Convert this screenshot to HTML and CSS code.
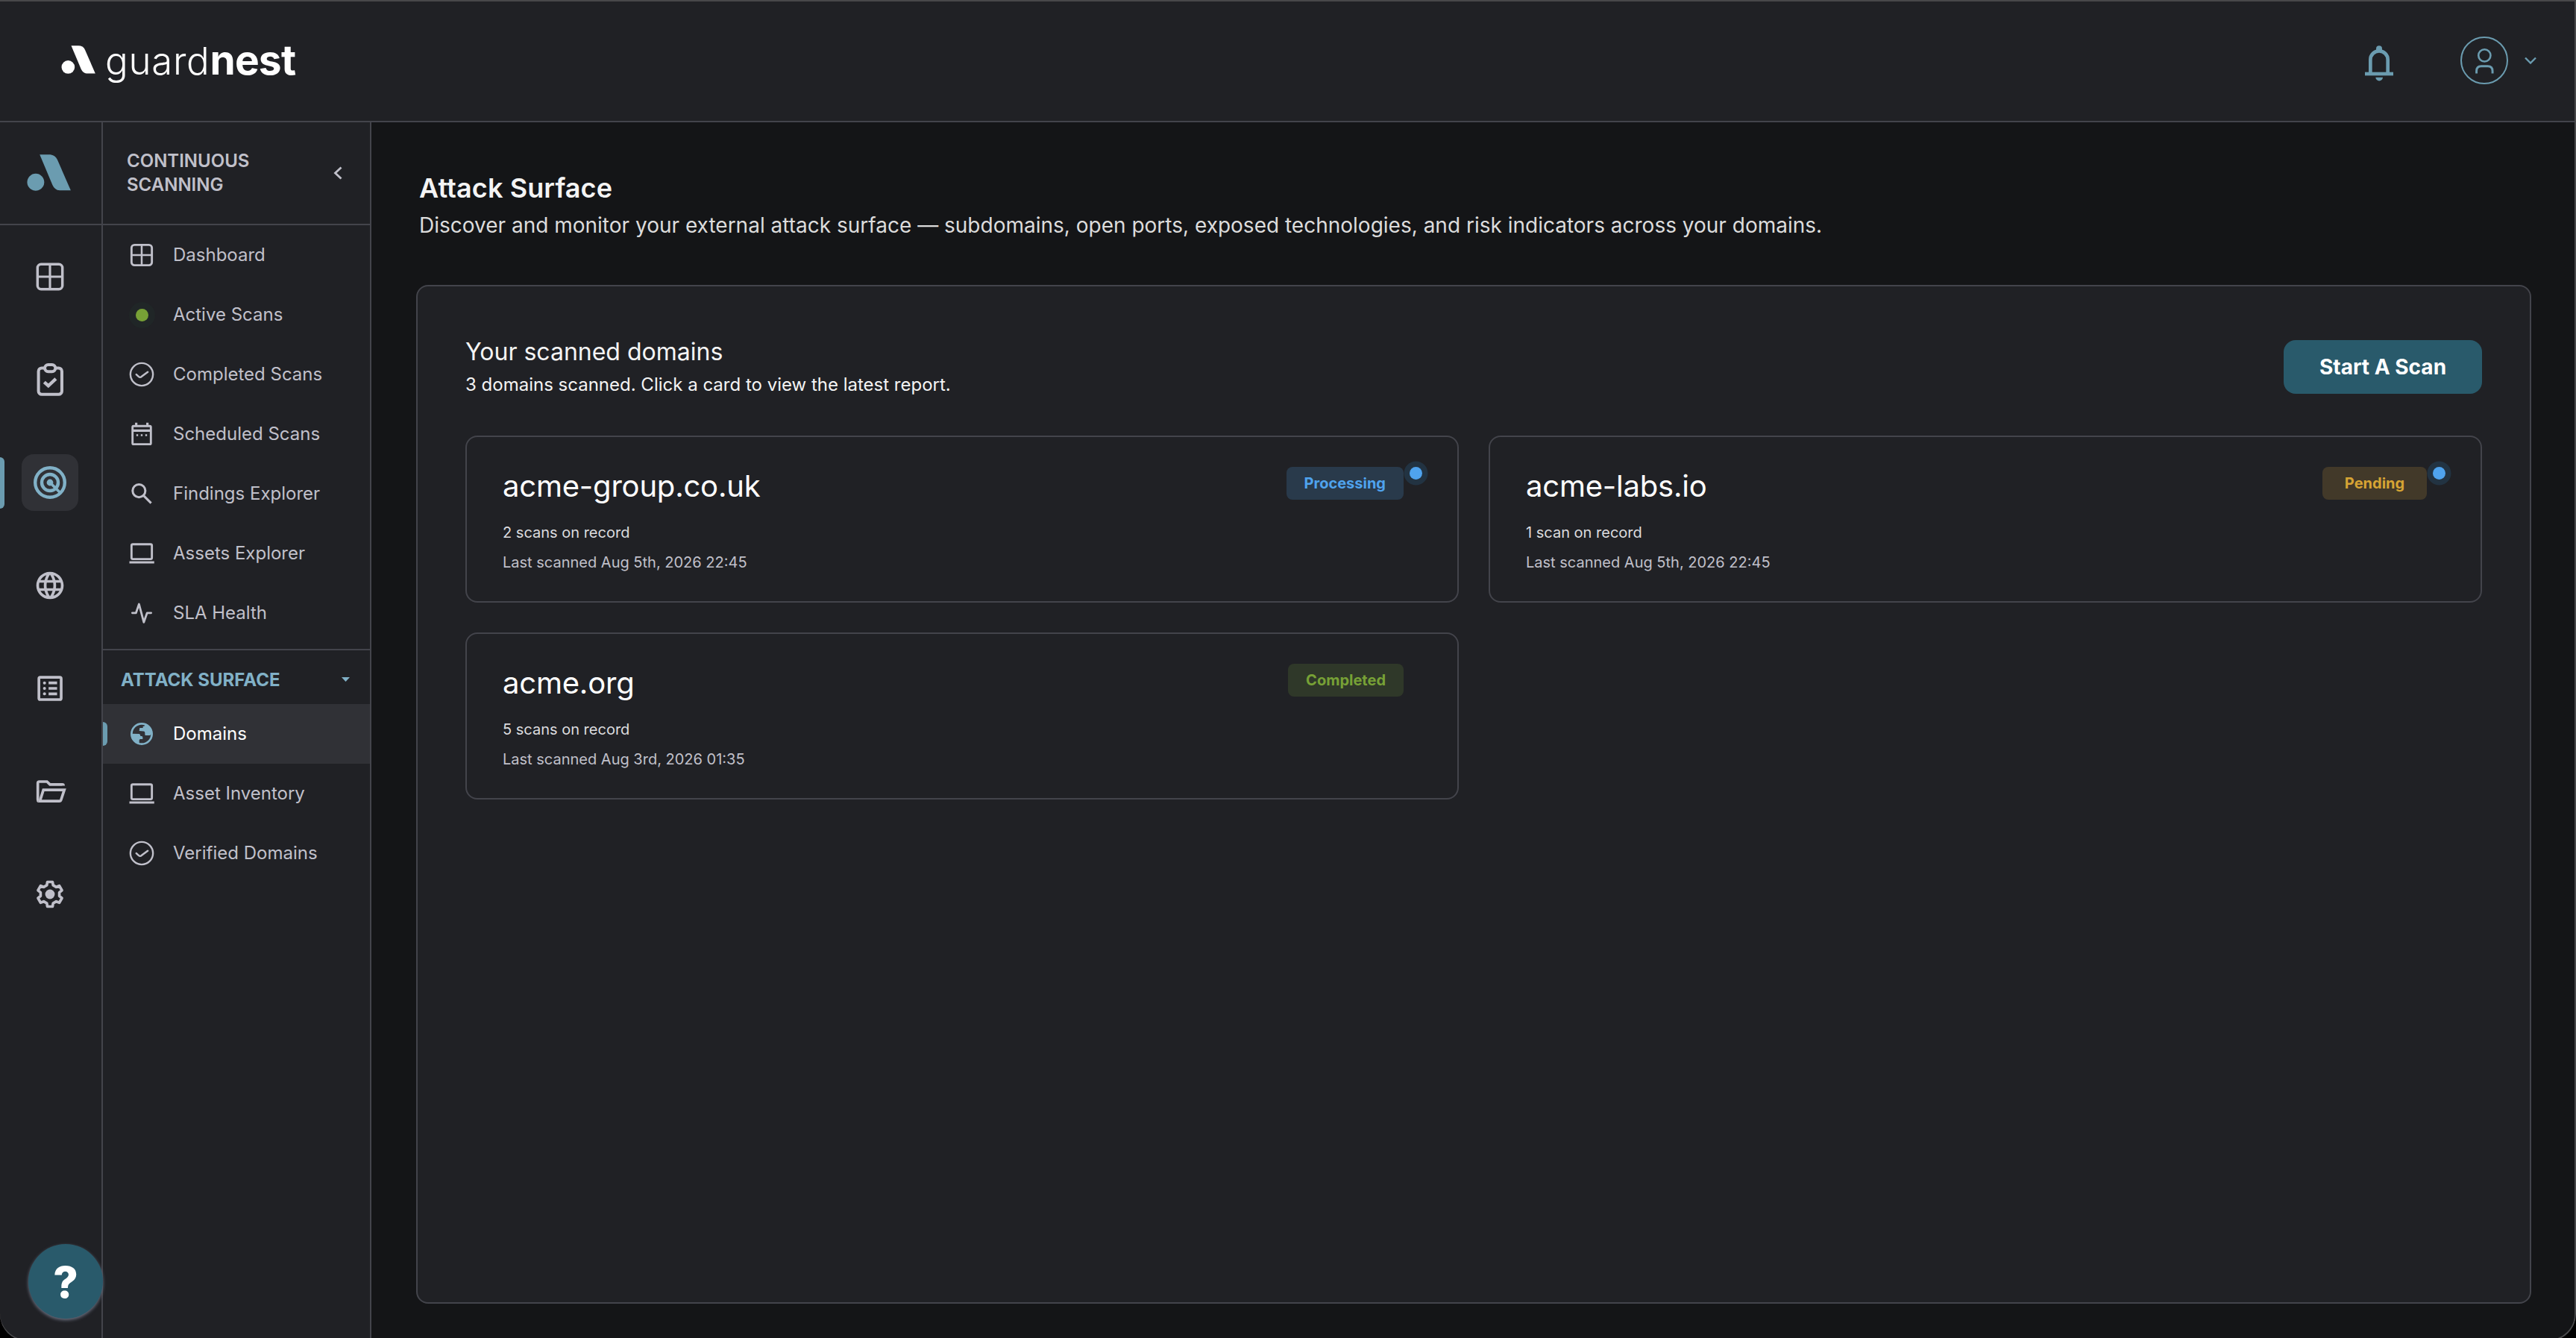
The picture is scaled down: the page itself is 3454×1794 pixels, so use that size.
FILE: index.html
```html
<!DOCTYPE html>
<html lang="en">
<head>
  <meta charset="UTF-8">
  <meta name="viewport" content="width=device-width, initial-scale=1.0">
  <title>Attack Surface</title>
  <link rel="stylesheet" href="styles.css">
</head>
<body>

<!-- Shared icons -->
<svg class="sprite" xmlns="http://www.w3.org/2000/svg">
  <symbol id="mark" viewBox="0 0 175 146">
    <circle cx="35" cy="111" r="34"/>
    <path d="M51 1H88C104 1 115 8 122 22L175 144H136C119 144 109 137 102 122Z"/>
  </symbol>
  <symbol id="grid" viewBox="0 0 24 24">
    <rect x="2.9" y="2.9" width="18.2" height="18.2" rx="2.6" fill="none" stroke="currentColor" stroke-width="1.9"/>
    <path d="M12 3v18M3 12h18" fill="none" stroke="currentColor" stroke-width="1.7"/>
  </symbol>
  <symbol id="check-circle" viewBox="0 0 24 24">
    <circle cx="12" cy="12" r="10.1" fill="none" stroke="currentColor" stroke-width="1.6"/>
    <path d="M7.2 12.1l2 1.8q1.4 1.2 2.8 0l5.4-4" fill="none" stroke="currentColor" stroke-width="1.7" stroke-linecap="round"/>
  </symbol>
  <symbol id="laptop" viewBox="0 0 24 24">
    <rect x="2.9" y="3.8" width="18.2" height="13.3" rx="1.2" fill="none" stroke="currentColor" stroke-width="1.9"/>
    <path d="M1 20h22.2" fill="none" stroke="currentColor" stroke-width="2"/>
  </symbol>
</svg>

<div class="window">
  <header class="topbar">
    <div class="brand">
      <svg class="brand-mark"><use href="#mark"/></svg>
      <div class="brand-name"><span class="brand-light">guard</span><span class="brand-bold">nest</span></div>
    </div>
    <div class="topbar-actions">
      <svg class="bell" viewBox="390 180 120 150">
        <path d="M415 292V240a35 35 0 0 1 70 0v52" fill="none" stroke="currentColor" stroke-width="14"/>
        <path d="M438 206v-10a12 12 0 0 1 24 0v10z"/>
        <rect x="393" y="290" width="114" height="14"/>
        <path d="M436 311h29a14.5 14.5 0 0 1-29 0z"/>
      </svg>
      <div class="avatar">
        <svg class="avatar-icon" viewBox="830 185 86 112">
          <circle cx="874" cy="219" r="25" fill="none" stroke="currentColor" stroke-width="8"/>
          <path d="M841 293v-10q0-20 20-20h26q20 0 20 20v10" fill="none" stroke="currentColor" stroke-width="9"/>
        </svg>
      </div>
      <svg class="avatar-chevron" viewBox="0 0 16 10"><path d="M1 1.5l7 7 7-7" fill="none" stroke="currentColor" stroke-width="2.4"/></svg>
    </div>
  </header>

  <div class="body">
    <!-- Product rail -->
    <nav class="rail">
      <div class="rail-head"><svg class="rail-mark"><use href="#mark"/></svg></div>
      <div class="rail-items">
        <a class="rail-item"><svg class="icon"><use href="#grid"/></svg></a>
        <a class="rail-item">
          <svg class="icon" viewBox="0 0 24 24" fill="none" stroke="currentColor" stroke-width="2.2">
            <path d="M7.8 3.5H6a2.4 2.4 0 0 0-2.400 2.400v14.500a2.400 2.400 0 0 0 2.400 2.400h12.300a2.400 2.400 0 0 0 2.400-2.400V5.900a2.400 2.400 0 0 0-2.400-2.400h-1.800"/>
            <rect x="8.2" y="1.1" width="7.8" height="5" rx="2.5"/>
            <path d="M7.800 13.800l3 2.700 5.500-5.100" stroke-width="2.4"/>
          </svg>
        </a>
        <a class="rail-item active">
          <svg class="icon" viewBox="0 0 24 24" fill="none" stroke="currentColor" stroke-width="2.4">
            <circle cx="12" cy="12" r="10.8"/>
            <circle cx="12" cy="12" r="6"/>
            <circle cx="12" cy="12" r="2.4" fill="currentColor" stroke="none"/>
            <path d="M12 12l7.400 7.400" stroke-width="2"/>
          </svg>
        </a>
        <a class="rail-item">
          <svg class="icon" viewBox="0 0 24 24" fill="currentColor">
            <path d="M11.990 2C6.470 2 2 6.480 2 12s4.470 10 9.990 10C17.520 22 22 17.520 22 12S17.520 2 11.990 2zm6.930 6h-2.950c-.32-1.250-.78-2.450-1.380-3.560 1.840.63 3.370 1.910 4.330 3.560zM12 4.040c.83 1.200 1.480 2.530 1.910 3.960h-3.820c.43-1.430 1.080-2.760 1.910-3.960zM4.260 14C4.100 13.360 4 12.690 4 12s.1-1.360.26-2h3.380c-.08.66-.14 1.320-.14 2 0 .68.06 1.340.14 2H4.260zm.82 2h2.950c.32 1.250.78 2.450 1.380 3.560-1.840-.63-3.370-1.900-4.330-3.560zm2.950-8H5.080c.96-1.660 2.490-2.930 4.330-3.560C8.810 5.550 8.350 6.750 8.030 8zM12 19.960c-.83-1.200-1.480-2.530-1.910-3.960h3.820c-.43 1.430-1.080 2.760-1.910 3.960zM14.340 14H9.660c-.09-.66-.16-1.320-.16-2 0-.68.07-1.350.16-2h4.680c.09.65.16 1.320.16 2 0 .68-.07 1.340-.16 2zm.25 5.560c.6-1.110 1.060-2.310 1.380-3.560h2.950c-.96 1.650-2.490 2.930-4.330 3.560zM16.360 14c.08-.66.14-1.320.14-2 0-.68-.06-1.340-.14-2h3.380c.16.640.26 1.310.26 2s-.1 1.360-.26 2h-3.380z"/>
          </svg>
        </a>
        <a class="rail-item">
          <svg class="icon" viewBox="0 0 24 24" fill="currentColor">
            <rect x="3.9" y="3.9" width="16.3" height="16.3" rx="1" fill="none" stroke="currentColor" stroke-width="2"/>
            <circle cx="8" cy="8" r="1.1"/><circle cx="8" cy="12" r="1.1"/><circle cx="8" cy="16" r="1.1"/>
            <path d="M11 7h6.200v2H11zM11 11h6.200v2H11zM11 15h6.200v2H11z"/>
          </svg>
        </a>
        <a class="rail-item">
          <svg class="icon" viewBox="0 0 24 24" fill="none" stroke="currentColor" stroke-width="2">
            <path d="M3.600 19.200Q3.100 19 3.100 18V6q0-1.100 1.100-1.100h5.600l2.200 2.100H21q.9 0 .9.900"/>
            <path d="M4.600 19.200l2.600-8.200h15.300l-2.400 7.300q-.3.900-1.200.9z"/>
          </svg>
        </a>
        <a class="rail-item">
          <svg class="icon" viewBox="-12 -12 24 24" fill="none" stroke="currentColor" stroke-width="2" stroke-linejoin="round">
            <path d="M-1.900-9H1.900L2.300-6.600 4.570-5.290 6.840-6.150 8.740-2.850 6.870-1.310V1.310L8.740 2.850 6.840 6.150 4.570 5.290 2.300 6.600 1.900 9H-1.900L-2.300 6.600-4.570 5.290-6.840 6.150-8.740 2.850-6.870 1.310V-1.310L-8.740-2.850-6.840-6.150-4.570-5.290-2.300-6.600Z"/>
            <circle r="3.5" fill="currentColor" stroke="none"/>
          </svg>
        </a>
      </div>
    </nav>

    <!-- Section navigation -->
    <aside class="sidebar">
      <div class="sidebar-head">
        <h2 class="sidebar-title">Continuous Scanning</h2>
        <svg class="collapse" viewBox="0 0 12 18"><path d="M10.5 1.500L2.500 9l8 7.500" fill="none" stroke="currentColor" stroke-width="2.8"/></svg>
      </div>
      <ul class="menu">
        <li class="menu-item"><svg class="menu-icon"><use href="#grid"/></svg>Dashboard</li>
        <li class="menu-item"><span class="menu-icon"><span class="live-dot"></span></span>Active Scans</li>
        <li class="menu-item"><svg class="menu-icon"><use href="#check-circle"/></svg>Completed Scans</li>
        <li class="menu-item">
          <svg class="menu-icon" viewBox="0 0 24 24" fill="none" stroke="currentColor" stroke-width="1.9">
            <rect x="3.8" y="4.8" width="16.4" height="16.3" rx="1"/>
            <path d="M4 8.900h16M7.100 1.800V5M17.100 1.800V5" stroke-width="2.1"/>
            <path d="M7.200 13h1.600M11.200 13h1.600M15.200 13h1.600" stroke-width="1.6"/>
          </svg>Scheduled Scans
        </li>
        <li class="menu-item">
          <svg class="menu-icon" viewBox="0 0 24 24" fill="none" stroke="currentColor" stroke-width="2">
            <circle cx="9.56" cy="9.4" r="5.7"/>
            <path d="M13.600 13.600l6.800 6.800"/>
          </svg>Findings Explorer
        </li>
        <li class="menu-item"><svg class="menu-icon"><use href="#laptop"/></svg>Assets Explorer</li>
        <li class="menu-item">
          <svg class="menu-icon" viewBox="0 0 24 24" fill="none" stroke="currentColor" stroke-width="1.9" stroke-linecap="round" stroke-linejoin="round">
            <path d="M3.600 11.900h3.300L9.600 4l4.300 16.200 2.900-8.300h3.600"/>
          </svg>SLA Health
        </li>
      </ul>
      <div class="group-head">
        <span>Attack Surface</span>
        <svg class="caret" viewBox="0 0 11 6"><path d="M0 0h11L5.500 6z" fill="currentColor"/></svg>
      </div>
      <ul class="menu">
        <li class="menu-item active">
          <svg class="menu-icon" viewBox="0 0 24 24" fill="currentColor">
            <circle cx="12" cy="12" r="9.1" fill="none" stroke="currentColor" stroke-width="1.8"/>
            <path d="M14.900 2.500V4q0 1.200-1.800 1.300v1.400h-2.900l-.4 2.700 3.900.3q1.200 0 1.200 1.500v1.500q0 .6.600.6h3.800l2.200-1.700Q21 4.500 14.900 2.500z"/>
            <path d="M2.300 11.900l7.500.1q1.100.2 1.100 2h1q1 0 1 1v1.700H10.800q-1 0-1 1v3.900Q2.500 19 2.300 11.900z"/>
          </svg>Domains
        </li>
        <li class="menu-item"><svg class="menu-icon"><use href="#laptop"/></svg>Asset Inventory</li>
        <li class="menu-item"><svg class="menu-icon"><use href="#check-circle"/></svg>Verified Domains</li>
      </ul>
    </aside>

    <main class="main">
      <h1 class="page-title">Attack Surface</h1>
      <p class="page-subtitle">Discover and monitor your external attack surface — subdomains, open ports, exposed technologies, and risk indicators across your domains.</p>

      <section class="panel">
        <div class="panel-head">
          <div>
            <h2 class="panel-title">Your scanned domains</h2>
            <p class="panel-text">3 domains scanned. Click a card to view the latest report.</p>
          </div>
          <button class="scan-button">Start A Scan</button>
        </div>

        <div class="cards">
          <article class="card">
            <div>
              <h3 class="card-domain">acme-group.co.uk</h3>
              <p class="card-count">2 scans on record</p>
              <p class="card-date">Last scanned Aug 5th, 2026 22:45</p>
            </div>
            <span class="badge processing">Processing<i class="pulse"></i></span>
          </article>
          <article class="card">
            <div>
              <h3 class="card-domain">acme-labs.io</h3>
              <p class="card-count">1 scan on record</p>
              <p class="card-date">Last scanned Aug 5th, 2026 22:45</p>
            </div>
            <span class="badge pending">Pending<i class="pulse"></i></span>
          </article>
          <article class="card">
            <div>
              <h3 class="card-domain">acme.org</h3>
              <p class="card-count">5 scans on record</p>
              <p class="card-date">Last scanned Aug 3rd, 2026 01:35</p>
            </div>
            <span class="badge completed">Completed</span>
          </article>
        </div>
      </section>
    </main>
  </div>

  <button class="help">?</button>
</div>

</body>
</html>
```
FILE: styles.css
```css
* {
  box-sizing: border-box;
  margin: 0;
  padding: 0;
}

body {
  background-color: #000;
  font-family: Inter, "Liberation Sans", sans-serif;
  font-size: 24px;
  color: #c0c0ca;
  height: 100vh;
  overflow: hidden;
}

ul {
  list-style: none;
}

.sprite {
  display: none;
}

.window {
  position: relative;
  display: flex;
  flex-direction: column;
  height: 1798px;
  background-color: #141517;
  border-radius: 0 0 36px 36px;
  overflow: hidden;
}

/* thin frame drawn over the content */
.window::after {
  content: "";
  position: absolute;
  inset: 0 0 0 -2px;
  border: 2px solid #48484a;
  border-radius: 0 0 36px 38px;
  pointer-events: none;
}

/* Top bar */
.topbar {
  display: flex;
  align-items: center;
  justify-content: space-between;
  flex: none;
  height: 164px;
  padding: 0 53px 0 82px;
  background-color: #202125;
  border-bottom: 2px solid #43444b;
}

.brand {
  display: flex;
  align-items: center;
  gap: 13px;
}

.brand-mark {
  width: 46px;
  height: 38px;
  margin-top: -2px;
  fill: #fff;
}

.brand-name {
  display: flex;
  align-items: baseline;
  color: #fff;
  line-height: 64px;
}

.brand-light {
  font-size: 51px;
  font-weight: 300;
  letter-spacing: 0.7px;
}

.brand-bold {
  font-size: 55px;
  font-weight: 700;
  letter-spacing: -0.8px;
}

.topbar-actions {
  display: flex;
  align-items: center;
  color: #6b9cb0;
}

.bell {
  width: 40px;
  height: 50px;
  margin: 8px 89px 0 0;
  fill: currentColor;
}

.avatar {
  display: flex;
  align-items: center;
  justify-content: center;
  width: 64px;
  height: 64px;
  border: 2px solid #6b9cb0;
  border-radius: 50%;
}

.avatar-icon {
  width: 28px;
  height: 37px;
}

.avatar-chevron {
  width: 16px;
  height: 10px;
  margin-left: 22px;
}

.body {
  display: flex;
  flex: 1;
  min-height: 0;
}

/* Product rail */
.rail {
  width: 138px;
  flex: none;
  background-color: #202125;
  border-right: 2px solid #43444b;
}

.rail-head {
  height: 138px;
  padding: 43px 0 0 36px;
  border-bottom: 2px solid #43444b;
}

.rail-mark {
  display: block;
  width: 59px;
  height: 49px;
  fill: #6b9cb0;
}

.rail-items {
  display: flex;
  flex-direction: column;
  gap: 62px;
  padding-top: 31px;
}

.rail-item {
  position: relative;
  display: flex;
  align-items: center;
  justify-content: center;
  width: 76px;
  height: 76px;
  margin-left: 29px;
  border-radius: 16px;
}

.rail-item.active {
  background-color: #303136;
  color: #81b1c7;
}

.rail-item.active::before {
  content: "";
  position: absolute;
  left: -29px;
  top: 4px;
  width: 6px;
  height: 69px;
  background-color: #6b9cb0;
  border-radius: 0 6px 6px 0;
}

.icon {
  width: 44px;
  height: 44px;
}

/* Section navigation */
.sidebar {
  width: 360px;
  flex: none;
  background-color: #202125;
  border-right: 2px solid #43444b;
}

.sidebar-head {
  display: flex;
  align-items: center;
  justify-content: space-between;
  height: 138px;
  padding: 0 37px 0 32px;
  border-bottom: 2px solid #43444b;
}

.sidebar-title {
  width: 200px;
  font-size: 24px;
  font-weight: 600;
  line-height: 32px;
  text-transform: uppercase;
}

.collapse {
  width: 12px;
  height: 18px;
}

.menu-item {
  position: relative;
  display: flex;
  align-items: center;
  gap: 24px;
  height: 80px;
  padding-left: 34px;
  line-height: 30px;
}

.menu-item.active {
  background-color: #303136;
  color: #fff;
}

.menu-item.active::before {
  content: "";
  position: absolute;
  left: 0;
  top: 24px;
  width: 6px;
  height: 32px;
  background-color: #6b9cb0;
  border-radius: 0 6px 6px 0;
}

.menu-icon {
  display: flex;
  align-items: center;
  justify-content: center;
  flex: none;
  width: 36px;
  height: 36px;
}

.menu-item.active .menu-icon {
  color: #81b1c7;
}

.live-dot {
  width: 17px;
  height: 17px;
  border-radius: 50%;
  background-color: #77a136;
  box-shadow: 0 0 0 9px #202627;
}

.group-head {
  display: flex;
  align-items: center;
  justify-content: space-between;
  height: 74px;
  margin-top: 8px;
  padding: 6px 27px 0 24px;
  border-top: 2px solid #43444b;
  font-weight: 700;
  text-transform: uppercase;
  color: #81b1c7;
}

.caret {
  width: 11px;
  height: 6px;
}

/* Page */
.main {
  display: flex;
  flex-direction: column;
  flex: 1;
  padding: 66px 60px 50px;
}

.page-title {
  margin: 0 0 10px 4px;
  font-size: 36px;
  font-weight: 600;
  line-height: 44px;
  letter-spacing: 0.1px;
  color: #f4f4f4;
}

.page-subtitle {
  margin: 0 0 62px 4px;
  font-size: 28px;
  line-height: 36px;
  color: #dcdcdc;
}

.panel {
  flex: 1;
  padding: 64px;
  background-color: #202125;
  border: 2px solid #43444b;
  border-radius: 16px;
}

.panel-head {
  display: flex;
  align-items: center;
  justify-content: space-between;
  height: 88px;
  margin-bottom: 48px;
}

.panel-title {
  margin-bottom: 8px;
  font-size: 32px;
  font-weight: 400;
  line-height: 40px;
  color: #f4f4f4;
}

.panel-text {
  line-height: 32px;
  color: #f4f4f4;
}

.scan-button {
  width: 266px;
  height: 72px;
  border: none;
  border-radius: 16px;
  background-color: #295a6b;
  color: #fff;
  font-family: inherit;
  font-size: 28px;
  font-weight: 700;
}

.cards {
  display: grid;
  grid-template-columns: 1fr 1fr;
  gap: 40px;
}

.card {
  display: flex;
  align-items: flex-start;
  justify-content: space-between;
  height: 224px;
  padding: 40px 72px 0 48px;
  border: 2px solid #43444b;
  border-radius: 16px;
}

.card-domain {
  margin: 2px 0 18px;
  font-size: 40px;
  font-weight: 400;
  line-height: 48px;
  letter-spacing: -0.2px;
  color: #fff;
}

.card-count,
.card-date {
  font-size: 20px;
  line-height: 40px;
}

.card-count {
  color: #dcdcdf;
}

.badge {
  position: relative;
  min-width: 140px;
  height: 44px;
  padding: 0 24px;
  border-radius: 8px;
  font-size: 20px;
  font-weight: 700;
  line-height: 44px;
  text-align: center;
}

.processing {
  background-color: #293a4b;
  color: #4fa3ee;
}

.pending {
  background-color: #423929;
  color: #d6a434;
}

.completed {
  background-color: #2f3829;
  color: #77a136;
}

.pulse {
  position: absolute;
  top: 0;
  right: -25px;
  width: 17px;
  height: 17px;
  border-radius: 50%;
  background-color: #4fa3ee;
  box-shadow: 0 0 0 7.5px #223342;
}

/* Floating help button */
.help {
  position: absolute;
  left: 38px;
  top: 1668px;
  width: 100px;
  height: 100px;
  padding-top: 2px;
  border: none;
  border-radius: 50%;
  background-color: #295a6b;
  box-shadow: 0 2px 4px #6b7080;
  color: #fff;
  font-family: inherit;
  font-size: 58px;
  font-weight: 800;
}
```
